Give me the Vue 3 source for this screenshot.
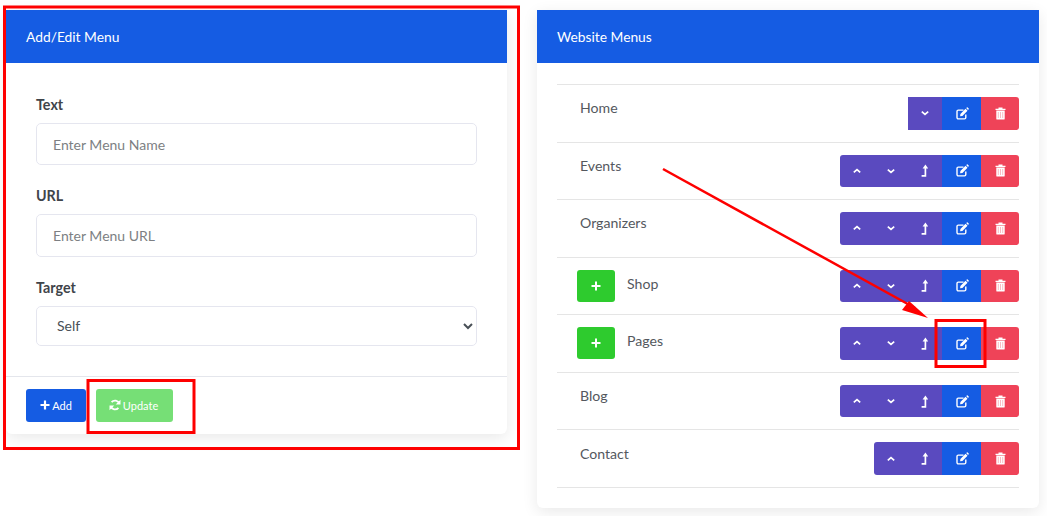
<script setup>
const rows = [
  { name: 'Home', up: false, down: true, out: false, plus: false },
  { name: 'Events', up: true, down: true, out: true, plus: false },
  { name: 'Organizers', up: true, down: true, out: true, plus: false },
  { name: 'Shop', up: true, down: true, out: true, plus: true },
  { name: 'Pages', up: true, down: true, out: true, plus: true },
  { name: 'Blog', up: true, down: true, out: true, plus: false },
  { name: 'Contact', up: true, down: false, out: true, plus: false },
]
</script>

<template>
  <div class="page">
    <section class="card left">
      <header class="card-head">Add/Edit Menu</header>
      <div class="form">
        <div class="field">
          <label>Text</label>
          <input type="text" placeholder="Enter Menu Name" />
        </div>
        <div class="field">
          <label>URL</label>
          <input type="text" placeholder="Enter Menu URL" />
        </div>
        <div class="field">
          <label>Target</label>
          <select>
            <option>Self</option>
          </select>
        </div>
      </div>
      <footer class="foot">
        <button class="btn add">
          <svg class="ico-plus" viewBox="0 0 10 10"><path d="M5 .5v9M.5 5h9" /></svg>Add
        </button>
        <button class="btn update">
          <svg class="ico-sync" viewBox="0 0 12 12">
            <path d="M10.300 4.600A4.500 4.500 0 0 0 2.600 3.200" />
            <path d="M1.700 7.400a4.500 4.500 0 0 0 7.700 1.400" />
            <path class="solid" d="M11.500.8v4.800H6.700zM.5 11.200V6.400h4.800z" />
          </svg>Update
        </button>
      </footer>
    </section>

    <section class="card right">
      <header class="card-head">Website Menus</header>
      <ul class="list">
        <li v-for="r in rows" :key="r.name" class="row" :class="{ 'with-plus': r.plus }">
          <button v-if="r.plus" class="plus-btn">
            <svg viewBox="0 0 10 10"><path d="M5 .5v9M.5 5h9" /></svg>
          </button>
          <span class="name">{{ r.name }}</span>
          <div class="group" :class="{ 'square-left': !r.up }">
            <button v-if="r.up" class="act purple">
              <svg viewBox="0 0 10 10"><path d="M1.800 6.400 5 3.600l3.200 2.800" /></svg>
            </button>
            <button v-if="r.down" class="act purple">
              <svg viewBox="0 0 10 10"><path d="M1.800 3.600 5 6.400l3.200-2.800" /></svg>
            </button>
            <button v-if="r.out" class="act purple tall">
              <svg viewBox="0 0 8 13"><path class="bold" d="M.6 11.800h3.800V3.500" /><path class="solid" d="M1.600 4.400 4.400.6 7.200 4.400z" /></svg>
            </button>
            <button class="act blue">
              <svg class="lg" viewBox="0 0 13 13">
                <path class="thin" d="M9.800 7.600v3a1.300 1.300 0 0 1-1.300 1.300H2.300A1.300 1.300 0 0 1 1 10.600V4.400a1.300 1.300 0 0 1 1.300-1.300h5.200" />
                <path class="solid" d="M4.400 6.900 9.500 1.800l2 2-5.100 5.100-2.300.4zM10.200 1.100l.7-.7q.4-.3.8 0l1 1q.3.4 0 .8l-.7.7z" />
              </svg>
            </button>
            <button class="act red">
              <svg class="lg" viewBox="0 0 12 13">
                <path class="solid" d="M1 1.800h10v1.100H1zM4 .5h4v1.300H4zM1.800 3.400h8.400v8.300q0 .9-.9.9H2.700q-.9 0-.9-.9z" />
                <path class="stripe" d="M3.800 5v6M6 5v6M8.200 5v6" />
              </svg>
            </button>
          </div>
        </li>
      </ul>
    </section>

    <svg class="notes" viewBox="0 0 1047 516" width="1047" height="516">
      <rect x="4.500" y="7" width="514" height="441.500" />
      <rect x="88" y="380.500" width="106" height="52" />
      <rect x="936" y="320.500" width="49" height="46" />
      <path d="M663 169 915 308" />
      <path class="tip" d="M928 318 902 310 909 301z" />
    </svg>
  </div>
</template>

<style>
html, body { margin: 0; background: #fff; }
</style>

<style scoped>
.page {
  position: relative;
  width: 1047px;
  height: 516px;
  box-sizing: border-box;
  padding: 10px 8px 0 6px;
  display: flex;
  align-items: flex-start;
  gap: 30px;
  overflow: hidden;
  font-family: Lato, "Liberation Sans", sans-serif;
  font-size: 14px;
  color: #495057;
}
.card {
  background: #fff;
  border-radius: 0 0 6px 6px;
  box-shadow: 0 4px 16px rgba(0, 0, 0, .09);
  overflow: hidden;
}
.left { width: 501px; height: 424px; display: flex; flex-direction: column; }
.right { width: 502px; height: 498px; }
.card-head {
  height: 53px;
  box-sizing: border-box;
  padding-left: 20px;
  display: flex;
  align-items: center;
  background: #155ce3;
  color: #fff;
  font-size: 13.800px;
}
.form { flex: 1; padding: 31px 30px 0; }
.field { display: flex; flex-direction: column; margin-bottom: 20px; }
label { font-weight: 700; font-size: 14.300px; line-height: 22px; margin-bottom: 7px; color: #3f444a; }
input, select {
  box-sizing: border-box;
  width: 100%;
  border: 1px solid #e5e6ef;
  border-radius: 5px;
  background: #fff;
  outline: none;
  font-family: inherit;
  font-size: 14px;
  color: #495057;
}
input { height: 42.400px; padding: 0 16px; }
input::placeholder { color: #7d7f83; opacity: 1; }
select { height: 40px; padding: 0 16px; }
.foot {
  height: 58px;
  box-sizing: border-box;
  border-top: 1px solid #e4e6ec;
  padding: 12px 20px 0;
  display: flex;
  align-items: flex-start;
  gap: 10px;
}
.btn {
  height: 33px;
  border: 0;
  border-radius: 3px;
  color: #fff;
  font-family: inherit;
  font-size: 11px;
  display: flex;
  align-items: center;
  justify-content: center;
  gap: 2px;
  padding: 0 0 1px;
}
.add { width: 60px; background: #155ce3; }
.update { width: 77px; background: #76df76; }
.update svg { margin-left: -2px; }
.ico-plus { width: 10px; height: 10px; fill: none; stroke: #fff; stroke-width: 2.200; }
.ico-sync { width: 12px; height: 12px; fill: none; stroke: #fff; stroke-width: 1.800; }
.ico-sync .solid { fill: #fff; stroke: none; }

.list {
  list-style: none;
  margin: 21px 20px 0;
  padding: 0;
  border-bottom: 1px solid #e5e5e5;
  width: 462px;
  box-sizing: border-box;
}
.row {
  height: 57.550px;
  box-sizing: border-box;
  border-top: 1px solid #e5e5e5;
  display: flex;
  align-items: center;
  padding-left: 23px;
}
.with-plus { padding-left: 20px; }
.name { position: relative; top: -5.500px; color: #54585e; font-size: 14.100px; }
.with-plus .name { top: -2.500px; margin-left: 12px; }
.group { margin-left: auto; display: flex; height: 32.600px; border-radius: 3px; overflow: hidden; }
.square-left { border-radius: 0 3px 3px 0; }
.act {
  width: 34px;
  height: 100%;
  border: 0;
  padding: 0;
  display: flex;
  align-items: center;
  justify-content: center;
}
.act svg { width: 10px; height: 10px; fill: none; stroke: #fff; stroke-width: 1.700; }
.act .solid { fill: #fff; stroke: none; }
.act .bold { stroke-width: 1.700; }
.act svg.lg { width: 13px; height: 13px; }
.tall svg { width: 8px; height: 13px; }
.act .thin { stroke-width: 1.400; }
.act .stripe { stroke: currentColor; stroke-width: .8; opacity: .45; }
.purple { background: #5a4abf; }
.blue { width: 39px; background: #155ce3; padding-left: 1px; }
.red { width: 38px; background: #ef4358; color: #ef4358; }
.plus-btn {
  width: 38px;
  height: 32px;
  border: 0;
  padding: 0;
  border-radius: 3px;
  background: #2ecb2e;
  display: flex;
  align-items: center;
  justify-content: center;
}
.plus-btn svg { width: 10px; height: 10px; fill: none; stroke: #fff; stroke-width: 2; }

.notes { position: absolute; left: 0; top: 0; pointer-events: none; }
.notes rect { fill: none; stroke: #fe0000; stroke-width: 3; }
.notes path { fill: none; stroke: #fe0000; stroke-width: 2.500; }
.notes .tip { fill: #fe0000; stroke: none; }
</style>
